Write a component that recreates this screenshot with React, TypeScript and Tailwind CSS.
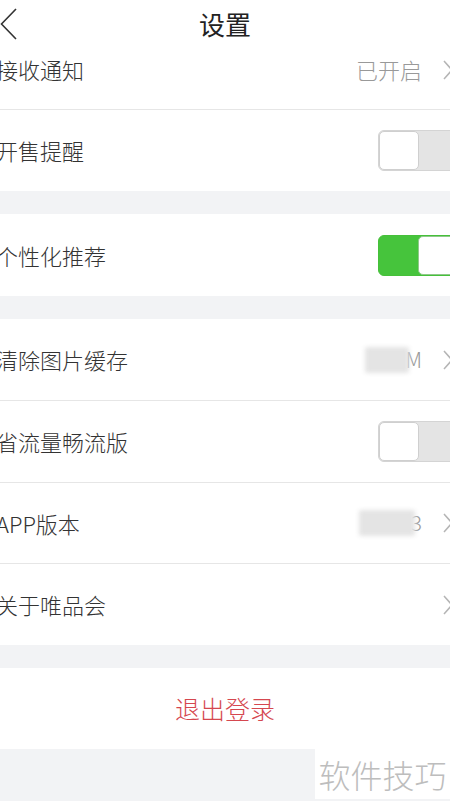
import React from "react";

const font = { fontFamily: '"Noto Sans CJK SC", "Noto Sans", sans-serif' };

function Chevron() {
  return (
    <svg width="12" height="22" viewBox="0 0 12 22" className="mr-[-4px] shrink-0">
      <path d="M2 2 L10 11 L2 20" fill="none" stroke="#b5b5b5" strokeWidth="1.5" />
    </svg>
  );
}

function Toggle({ on }: { on: boolean }) {
  return (
    <div className={`flex h-[41px] w-[90px] shrink-0 rounded-[6px] border ${on ? "border-[#46c03a] bg-[#46c43c]" : "border-[#d4d4d4] bg-[#e4e4e4]"}`}>
      {on ? (
        <>
          <div className="w-[39px]" />
          <div className="h-full w-[40px] rounded-[5px] border border-[#8fc98a] bg-white" />
        </>
      ) : (
        <div className="h-full w-[40px] rounded-[5px] border border-[#cfcfcf] bg-white" />
      )}
    </div>
  );
}

function Row({ label, right, border = true, h = 82 }: { label: string; right?: React.ReactNode; border?: boolean; h?: number }) {
  return (
    <div
      className={`flex items-center justify-between bg-white ${border ? "border-b border-[#e6e6e6]" : ""}`}
      style={{ height: h }}
    >
      <span className="ml-[-4px] text-[22px] font-light text-[#333]">{label}</span>
      <div className="flex items-center">{right}</div>
    </div>
  );
}

function Blur({ w, tail }: { w: number; tail: string }) {
  return (
    <div className="mr-[20px] flex items-center">
      <div className="h-[26px] rounded-[2px] bg-[#e4e4e4] blur-[2px]" style={{ width: w }} />
      <span className="ml-[-4px] text-[21px] font-light text-[#9a9a9a]">{tail}</span>
    </div>
  );
}

export default function App() {
  return (
    <div className="relative h-[801px] w-[450px] overflow-hidden bg-[#f2f3f5]" style={font}>
      <div className="relative h-[46px] bg-white">
        <svg className="absolute left-0 top-[8px]" width="18" height="32" viewBox="0 0 18 32">
          <path d="M16 1 L1.5 16 L16 31" fill="none" stroke="#333" strokeWidth="1.6" />
        </svg>
        <div className="flex h-full items-center justify-center text-[26px] text-[#222]">设置</div>
      </div>
      <div className="flex h-[64px] items-center justify-between border-b border-[#e6e6e6] bg-white pb-[16px]">
        <span className="ml-[-4px] text-[22px] font-light text-[#333]">接收通知</span>
        <div className="flex items-center">
          <span className="mr-[20px] text-[22px] font-light text-[#999]">已开启</span>
          <Chevron />
        </div>
      </div>
      <Row label="开售提醒" border={false} h={81} right={<div className="mr-[-18px]"><Toggle on={false} /></div>} />
      <div className="h-[23px]" />
      <Row label="个性化推荐" border={false} h={82} right={<div className="mr-[-18px]"><Toggle on={true} /></div>} />
      <div className="h-[23px]" />
      <Row label="清除图片缓存" h={82} right={<><Blur w={44} tail="M" /><Chevron /></>} />
      <Row label="省流量畅流版" h={82} right={<div className="mr-[-18px]"><Toggle on={false} /></div>} />
      <Row label="APP版本" h={81} right={<><Blur w={56} tail="3" /><Chevron /></>} />
      <Row label="关于唯品会" border={false} h={81} right={<Chevron />} />
      <div className="h-[23px]" />
      <div className="flex h-[81px] items-center justify-center bg-white text-[25px] font-light text-[#d5474f]">退出登录</div>
      <div className="flex h-[50px] justify-end">
        <div className="flex w-[135px] items-center justify-center bg-white text-[32px] font-light text-[#bdbdbd]">软件技巧</div>
      </div>
    </div>
  );
}
